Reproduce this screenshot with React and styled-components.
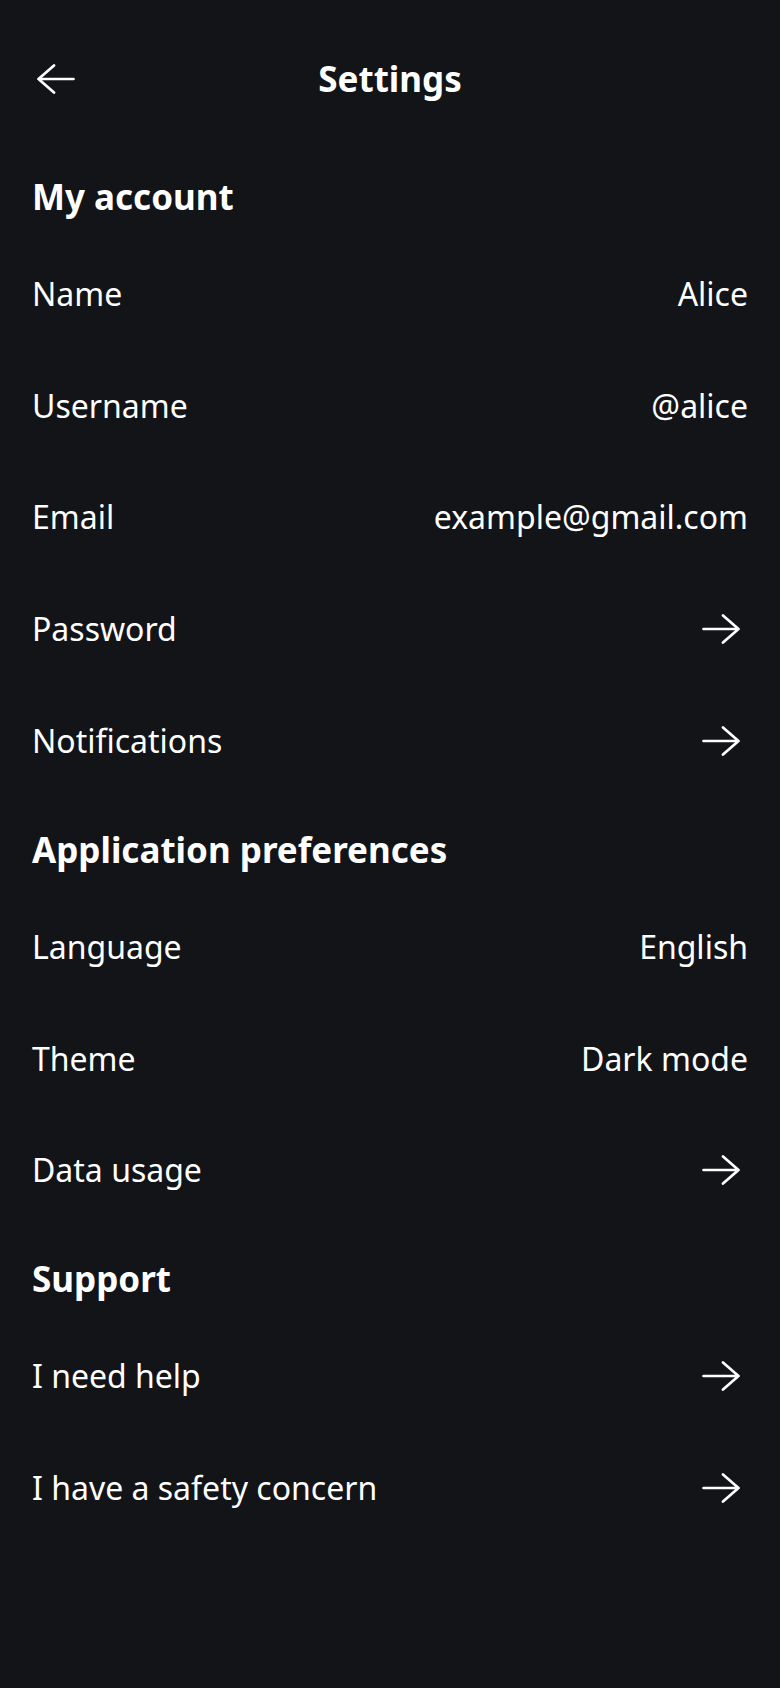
import React from 'react'
import styled, { createGlobalStyle } from 'styled-components'

const Global = createGlobalStyle`
  html, body {
    margin: 0;
    padding: 0;
    background: #121418;
  }
  body {
    font-family: "Noto Sans", "Open Sans", sans-serif;
    color: #ffffff;
  }
`

const Page = styled.div`
  min-height: 1688px;
  background: #121418;
  padding: 0 32px;
  box-sizing: border-box;
`

const Header = styled.div`
  display: grid;
  grid-template-columns: 60px 1fr 60px;
  align-items: center;
  height: 66px;
  padding-top: 46px;
`

const BackButton = styled.button`
  background: none;
  border: none;
  padding: 0;
  margin-left: 5px;
  display: flex;
  align-items: center;
  color: #fff;
  cursor: pointer;
`

const Title = styled.h1`
  margin: 0;
  text-align: center;
  font-size: 35px;
  font-weight: 700;
  line-height: 44px;
`

const Section = styled.section`
  margin-top: ${p => (p.first ? '63px' : '31px')};
`

const SectionTitle = styled.h2`
  margin: 0 0 19px;
  font-size: 35px;
  font-weight: 700;
  line-height: 44px;
`

const Row = styled.div`
  display: flex;
  align-items: center;
  justify-content: space-between;
  height: 111.8px;
  font-size: 32px;
  line-height: 42px;
`

const Value = styled.span`
  text-align: right;
`

const IconSlot = styled.span`
  display: flex;
  margin-right: 8px;
`

const Arrow = ({ back }) => (
  <svg width="38" height="30" viewBox="0 0 38 30" fill="none" stroke="currentColor"
    strokeWidth="2.7" strokeLinecap="round" strokeLinejoin="round"
    style={back ? { transform: 'scaleX(-1)' } : undefined}>
    <path d="M1.5 15H36.5M21 1.5L36.5 15L21 28.5" />
  </svg>
)

const sections = [
  {
    title: 'My account',
    rows: [
      { label: 'Name', value: 'Alice' },
      { label: 'Username', value: '@alice' },
      { label: 'Email', value: 'example@gmail.com' },
      { label: 'Password' },
      { label: 'Notifications' },
    ],
  },
  {
    title: 'Application preferences',
    rows: [
      { label: 'Language', value: 'English' },
      { label: 'Theme', value: 'Dark mode' },
      { label: 'Data usage' },
    ],
  },
  {
    title: 'Support',
    rows: [
      { label: 'I need help' },
      { label: 'I have a safety concern' },
    ],
  },
]

export default function App() {
  return (
    <Page>
      <Global />
      <Header>
        <BackButton aria-label="Back">
          <Arrow back />
        </BackButton>
        <Title>Settings</Title>
        <span />
      </Header>
      {sections.map((s, i) => (
        <Section key={s.title} first={i === 0}>
          <SectionTitle>{s.title}</SectionTitle>
          {s.rows.map(r => (
            <Row key={r.label}>
              <span>{r.label}</span>
              {r.value ? (
                <Value>{r.value}</Value>
              ) : (
                <IconSlot><Arrow /></IconSlot>
              )}
            </Row>
          ))}
        </Section>
      ))}
    </Page>
  )
}
